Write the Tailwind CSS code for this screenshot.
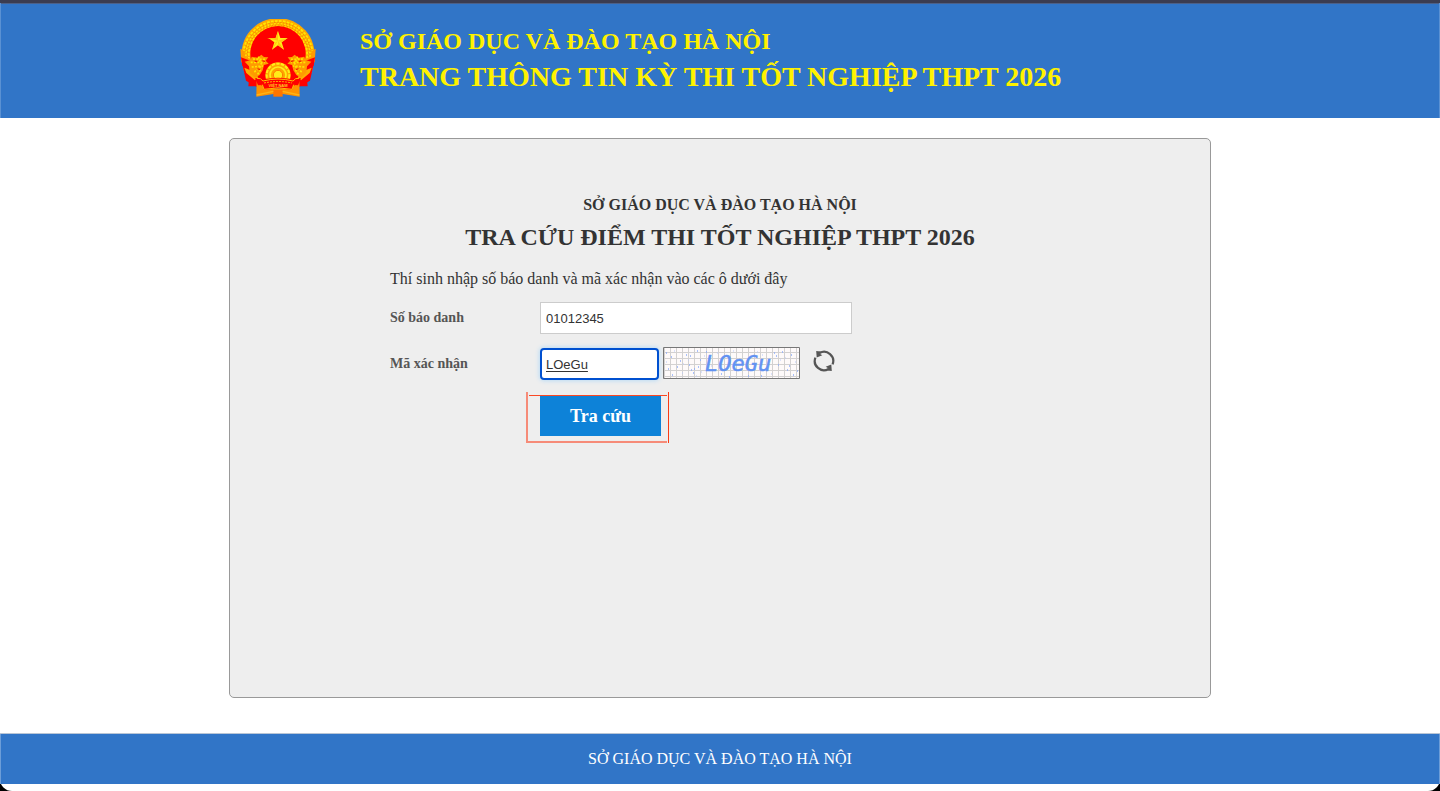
<!DOCTYPE html>
<html lang="vi">
<head>
<meta charset="utf-8">
<meta name="viewport" content="width=device-width, initial-scale=1">
<title>Tra cứu điểm thi tốt nghiệp THPT 2026</title>
<script src="https://cdn.jsdelivr.net/npm/@tailwindcss/browser@4"></script>
</head>
<body class="bg-black font-['Liberation_Serif',serif] text-[#333]">
<div class="flex min-h-screen flex-col rounded-b-xl bg-white">
  <header class="border-t-3 border-[#3b3c50] bg-[#3175c7] shadow-[inset_1px_0_#5a91d3,inset_-1px_0_#5a91d3,inset_0_1px_#4c6088]">
    <div class="mx-auto flex w-full max-w-[960px] items-start gap-11 pt-4 pb-[21px]">
      <svg class="h-[78px] w-[76px] shrink-0" viewBox="31 28 228 234" role="img" aria-label="Quốc huy Việt Nam">
        <path d="M36 150a110 110 0 1 1 218 0l-8 40H44z" fill="#ffa800"/>
        <circle cx="145" cy="138" r="104" fill="none" stroke="#ffe500" stroke-width="6" stroke-dasharray="8 4"/>
        <circle cx="145" cy="138" r="96" fill="none" stroke="#ffe500" stroke-width="5" stroke-dasharray="5 5"/>
        <circle cx="145" cy="138" r="88" fill="none" stroke="#ffe500" stroke-width="6" stroke-dasharray="8 4"/>
        <circle cx="145" cy="138" r="100" fill="none" stroke="#e87400" stroke-width="2" stroke-dasharray="4 5"/>
        <circle cx="145" cy="138" r="92" fill="none" stroke="#e87400" stroke-width="2" stroke-dasharray="4 5"/>
        <path d="M64 150a83 83 0 1 1 162 0l8 80H56z" fill="#f00"/>
        <path d="M32 117l12 8 2 16 22 9-17 16-16-8zM258 117l-12 8-2 16-22 9 17 16 16-8z" fill="#ff9b00"/>
        <path d="M34 143l36 13 12 24-44-12zM256 143l-36 13-12 24 44-12z" fill="#f00"/>
        <path d="M38 164l36 10 22 24 0 36-12-1-35-20zM252 164l-36 10-22 24 0 36 12-1 35-20z" fill="#f00"/>
        <path d="M44 174l24 10 18 19-10 9-26-22zM246 174l-24 10-18 19 10 9 26-22z" fill="#ffad00"/>
        <path d="M66 141l18 3 11-9 8 7 13 1-8 10 9 9-14 4-4 16-9 14-14 8-16-15-2-19-13-14 18-5zM224 141l-18 3-11-9-8 7-13 1 8 10-9 9 14 4 4 16 9 14 14 8 16-15 2-19 13-14-18-5z" fill="#ff9b00"/>
        <path d="M70 148l36 1M63 158l43 0M66 172l34-3M74 187l21-18M86 141l10 24M84 194l9-15M220 148l-36 1M227 158l-43 0M224 172l-34-3M216 187l-21-18M204 141l-10 24M206 194l-9-15" stroke="#ffe500" stroke-width="5" stroke-dasharray="6 4" fill="none"/>
        <path d="M75 154l8 2M83 177l8 3M98 153l8 3M215 154l-8 2M207 177l-8 3M192 153l-8 3" stroke="#f42b00" stroke-width="4"/>
        <path d="M145 64l7 21 22 0-18 13 7 22-18-13-18 13 7-22-18-13h22z" fill="#ffed18"/>
        <path d="M145 64v29l-33-8h26zM145 93l29-8-18 13zM145 93l18 27-18-13zM145 93l-7 5-11 22z" fill="#ffc70f"/>
        <circle cx="145" cy="196" r="38" fill="#ffa500"/>
        <circle cx="145" cy="196" r="34" fill="none" stroke="#ffed18" stroke-width="6" stroke-dasharray="10 4"/>
        <circle cx="145" cy="196" r="24" fill="none" stroke="#ffed18" stroke-width="5"/>
        <circle cx="145" cy="196" r="14" fill="#ffed18" stroke="#ff7800" stroke-width="3"/>
        <path d="M81 206l22 32h84l22-32 1 55-65-10-65 10z" fill="#ff9200"/>
        <path d="M131 241h28v20h-28z" fill="#ff7500"/>
        <path d="M81 256l50-11M209 256l-50-11" stroke="#ffb414" stroke-width="4"/>
        <path d="M76 206l16-1 8 5q45-12 90 0l8-5 16 1-9 21-13-1-5 15q-42-9-84 0l-5-15-13 1z" fill="#f00"/>
        <path d="M82 206l10 1 8 7q45-12 90 0l8-7 10-1M98 225l5 14q42-9 84 0l5-14" fill="none" stroke="#ffc000" stroke-width="3"/>
        <path d="M103 220q42-9 84 0" fill="none" stroke="#ffb400" stroke-width="3" stroke-dasharray="6 3"/>
        <text x="145" y="233" font-family="Liberation Sans, sans-serif" font-size="12" font-weight="bold" text-anchor="middle" fill="#ffcf20">VIỆT NAM</text>
      </svg>
      <div class="pt-1 font-bold text-[#fff200]">
        <p class="text-2xl leading-9">SỞ GIÁO DỤC VÀ ĐÀO TẠO HÀ NỘI</p>
        <p class="text-[28px] leading-9">TRANG THÔNG TIN KỲ THI TỐT NGHIỆP THPT 2026</p>
      </div>
    </div>
  </header>

  <main class="mx-auto mt-5 mb-[35px] w-full max-w-[982px] grow rounded-[5px] border border-[#999] bg-[#eee] pt-14">
    <div class="text-center font-bold">
      <h2 class="text-base leading-5">SỞ GIÁO DỤC VÀ ĐÀO TẠO HÀ NỘI</h2>
      <h1 class="mt-2 text-2xl leading-7">TRA CỨU ĐIỂM THI TỐT NGHIỆP THPT 2026</h1>
    </div>
    <form class="mt-4 px-40">
      <p class="text-base leading-6">Thí sinh nhập số báo danh và mã xác nhận vào các ô dưới đây</p>
      <div class="mt-[11px] flex items-center">
        <label for="sbd" class="w-[150px] text-sm leading-8 font-bold text-[#555]">Số báo danh</label>
        <input id="sbd" type="text" value="01012345" class="h-8 w-[312px] border border-[#ccc] bg-white px-[5px] font-['Liberation_Sans',sans-serif] text-[13px] outline-none">
      </div>
      <div class="mt-[13px] flex items-start">
        <label for="captcha" class="w-[150px] pt-px text-sm leading-8 font-bold text-[#555]">Mã xác nhận</label>
        <input id="captcha" type="text" value="LOeGu" class="mt-px h-8 w-[119px] rounded-[4px] border-2 border-[#0050d0] bg-white px-1 font-['Liberation_Sans',sans-serif] text-[13px] underline decoration-2 underline-offset-2 shadow-[0_0_4px_1px_#bcdcf5] outline-none">
        <svg class="ml-1 h-8 w-[137px]" viewBox="0 0 137 32" role="img" aria-label="Mã xác nhận">
          <defs><pattern id="grid" width="6" height="6" x="2" y="0" patternUnits="userSpaceOnUse"><path d="M5.500 0V6M0 5.500H6" stroke="#d3d1d1" fill="none"/></pattern></defs>
          <path fill="#fefafa" d="M0 0h137v32H0z"/>
          <path fill="url(#grid)" d="M0 0h137v32H0z"/>
          <path d="M3 6h1M8 10h1M5 22h1M9 28h1M17 14h1M14 20h1M23 8h1M27 9h1M26 18h1M28 23h1M31 22h1M30 26h1M34 4h1M37 13h1M35 20h1M43 5h1M46 13h1M58 27h1M66 30h1M85 29h1M98 29h1M104 20h1M111 6h1M115 18h1M119 5h1M124 23h1M128 8h1M126 19h1M134 24h1M130 28h1M113 9h1" stroke="#8fadfa" stroke-width="1.500"/>
          <path d="M11 4h1M19 26h1M20 17h1M25 13h1M33 29h1M38 25h1M41 9h1M48 19h1M54 6h1M70 4h1M94 5h1M108 27h1M117 13h1M122 11h1M132 15h1M106 12h1M3 15h1M99 8h1" stroke="#b8c9fb"/>
          <text x="42" y="24" font-family="DejaVu Sans Mono, monospace" font-size="22" font-style="italic" fill="#6292f2" stroke="#6292f2" stroke-width=".5">LOeGu</text>
          <path d="M.5.5h136v31H.5z" fill="none" stroke="#777"/>
        </svg>
        <button type="button" aria-label="Đổi mã xác nhận" class="mt-0.5 ml-3">
          <svg class="size-6" viewBox="0 0 24 24" fill="none" stroke="#555" stroke-width="2.200">
            <path d="M7.500 4A9.200 9.200 0 0 1 20.600 15.300M16.500 20A9.200 9.200 0 0 1 3.400 8.700"/>
            <path d="M4.200 2l.5 6.400 5.600-2.100-2.500-1.500 1-2.300zM19.800 22l-.5-6.400-5.600 2.100 2.500 1.500-1 2.300z" fill="#555" stroke="none"/>
          </svg>
        </button>
      </div>
      <div class="relative mt-4 ml-[150px] w-[121px]">
        <button type="submit" class="h-10 w-full bg-[#0d82d8] text-lg leading-8 font-bold text-white">Tra cứu</button>
        <span class="pointer-events-none absolute -top-1 -bottom-[7px] -left-3.5 w-0.5 bg-[#f68b78]"></span>
        <span class="pointer-events-none absolute -top-1 -right-2 -bottom-[7px] w-px bg-[#fa3c14]"></span>
        <span class="pointer-events-none absolute -top-px -right-1.5 -left-[11px] h-px bg-[#fa4824]"></span>
        <span class="pointer-events-none absolute -right-1.5 -bottom-[7px] -left-3 h-0.5 bg-[#f68b78]"></span>
      </div>
    </form>
  </main>

  <footer class="mb-[7px] border-t border-[#b9c5d5] bg-[#3175c7] shadow-[inset_1px_0_#6c9dd8,inset_-1px_0_#6c9dd8]">
    <p class="py-[13px] text-center text-base leading-6 text-white">SỞ GIÁO DỤC VÀ ĐÀO TẠO HÀ NỘI</p>
  </footer>
</div>
<script>
  document.querySelector('form').addEventListener('submit', function (e) { e.preventDefault(); });
</script>
</body>
</html>
